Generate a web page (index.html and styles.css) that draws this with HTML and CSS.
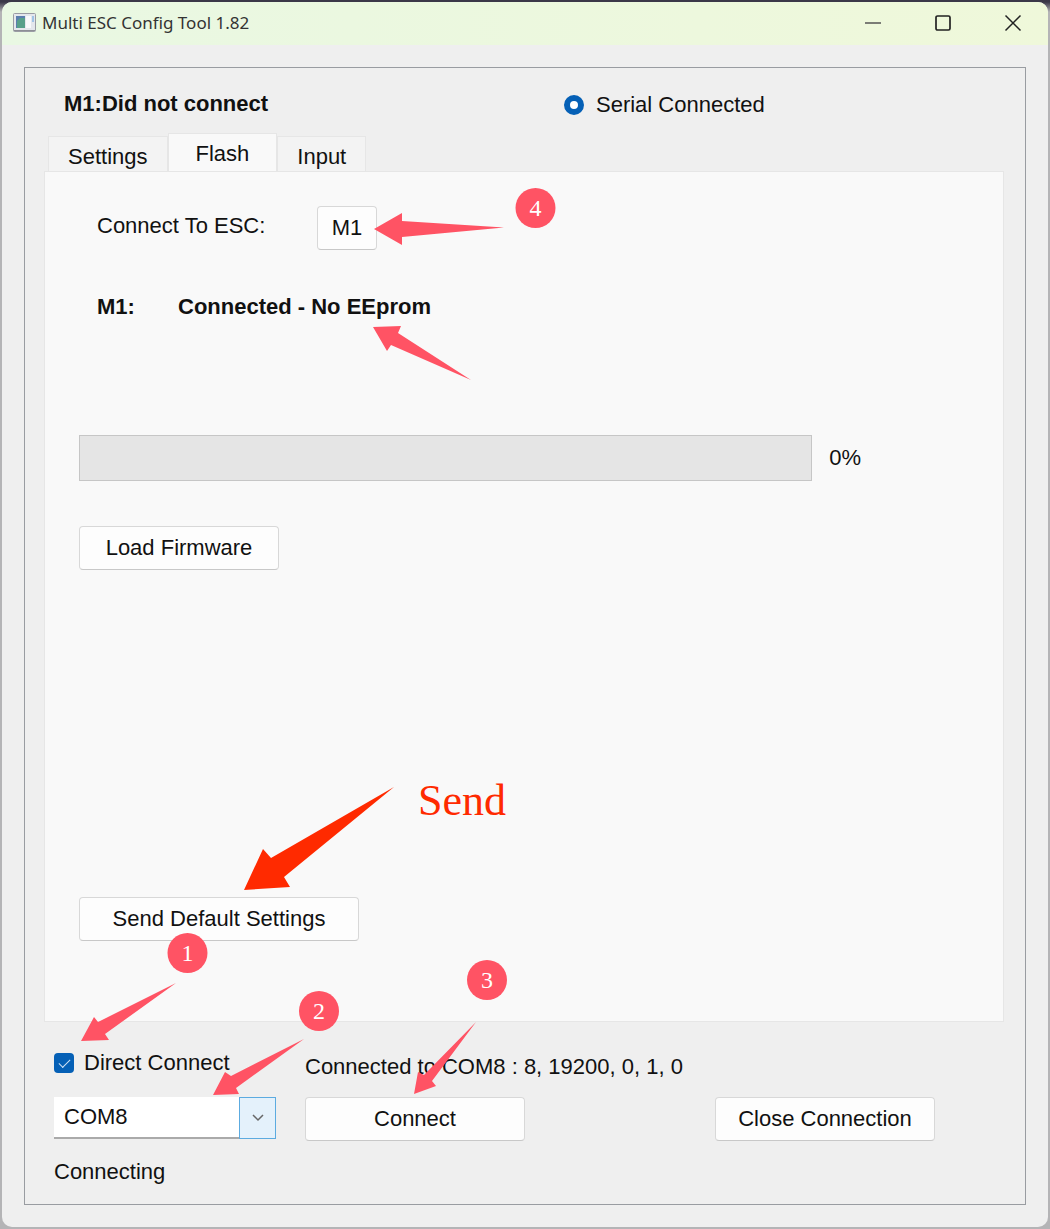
FILE: index.html
```html
<!DOCTYPE html>
<html lang="en">
<head>
<meta charset="utf-8">
<meta name="viewport" content="width=device-width, initial-scale=1">
<title>Multi ESC Config Tool 1.82</title>
<link rel="stylesheet" href="styles.css">
</head>
<body>
<div class="window">
  <header class="titlebar">
    <svg class="app-icon" width="23" height="19" viewBox="0 0 23 19" aria-hidden="true">
      <rect x="0.5" y="0.5" width="22" height="18" rx="1" fill="#e4e7ec" stroke="#9a9ca4"/>
      <rect x="3" y="3" width="9" height="12" fill="#5b7fae"/>
      <path d="M4 8 7 5h5v10H4z" fill="#57a08a"/>
      <rect x="13" y="3" width="5" height="12" fill="#f8f9fb"/>
      <rect x="19" y="3" width="2" height="6" fill="#9fc3e6"/>
      <path d="M1 17.500h21" stroke="#8d8f96"/>
    </svg>
    <h1 class="title">Multi ESC Config Tool 1.82</h1>
    <div class="window-controls">
      <button class="window-button" type="button" aria-label="Minimize">
        <svg width="18" height="18" viewBox="0 0 18 18"><path d="M1 9h16" stroke="#555" stroke-width="1.300"/></svg>
      </button>
      <button class="window-button" type="button" aria-label="Maximize">
        <svg width="18" height="18" viewBox="0 0 18 18"><rect x="2" y="2" width="14" height="14" rx="1.500" fill="none" stroke="#222" stroke-width="1.700"/></svg>
      </button>
      <button class="window-button" type="button" aria-label="Close">
        <svg width="18" height="18" viewBox="0 0 18 18"><path d="M1.500 1.500l15 15M16.500 1.500l-15 15" stroke="#222" stroke-width="1.500"/></svg>
      </button>
    </div>
  </header>

  <main class="frame">
    <div class="status-row">
      <strong>M1:Did not connect</strong>
      <label class="choice serial"><input class="radio" type="radio" checked>Serial Connected</label>
    </div>

    <div class="tabs" role="tablist">
      <button class="tab" type="button" role="tab" aria-selected="false">Settings</button>
      <button class="tab tab-active" type="button" role="tab" aria-selected="true">Flash</button>
      <button class="tab" type="button" role="tab" aria-selected="false">Input</button>
    </div>

    <section class="panel" role="tabpanel">
      <div class="connect-row">
        <span class="connect-label">Connect To ESC:</span>
        <div class="anchor">
          <button class="button button-small" type="button">M1</button>
          <svg class="mark mark-four" width="184" height="62" viewBox="0 0 184 62">
            <path d="M0 43 28 27v8l102 6.500L28 51v8z"/>
            <circle cx="161.500" cy="22" r="20"/>
            <text x="161.500" y="30">4</text>
          </svg>
        </div>
      </div>

      <div class="eeprom-row">
        <strong class="eeprom-name">M1:</strong>
        <div class="anchor">
          <strong>Connected - No EEprom</strong>
          <svg class="mark mark-eeprom" width="98" height="54" viewBox="0 0 98 54" aria-hidden="true">
            <path d="M0 1 28 0l-3 7 73 47L18 19l-4 6z"/>
          </svg>
        </div>
      </div>

      <div class="progress-row">
        <progress class="progress" id="flash-progress" value="0" max="100"></progress>
        <label for="flash-progress">0%</label>
      </div>

      <button class="button button-load" type="button">Load Firmware</button>

      <div class="anchor send">
        <button class="button button-send" type="button">Send Default Settings</button>
        <svg class="mark mark-send" width="270" height="104" viewBox="0 0 270 104">
          <path d="M0 103 19 62l8 9L150 0 40 90l6 10z"/>
          <text x="174" y="28">Send</text>
        </svg>
      </div>
    </section>

    <div class="connection">
      <div class="anchor direct">
        <label class="choice"><input class="checkbox" type="checkbox" checked>Direct Connect</label>
        <svg class="mark mark-one" width="128" height="110" viewBox="0 0 128 110">
          <path d="M0 109 13 85l4 5 78-39-71 51 4 6z"/>
          <circle cx="106.500" cy="21" r="20"/>
          <text x="106.500" y="29">1</text>
        </svg>
      </div>
      <span class="port-status">Connected to COM8 : 8, 19200, 0, 1, 0</span>
      <div class="anchor combo">
        <select class="select" aria-label="Serial port"><option>COM8</option></select>
        <span class="combo-arrow">
          <svg width="12" height="8" viewBox="0 0 12 8" aria-hidden="true"><path d="M1 1l5 5 5-5" fill="none" stroke="#666" stroke-width="1.500"/></svg>
        </span>
        <svg class="mark mark-two" width="128" height="106" viewBox="0 0 128 106">
          <path d="M0 105 12 82l6 4 73-37-68 49 3 6z"/>
          <circle cx="106" cy="21" r="20"/>
          <text x="106" y="29">2</text>
        </svg>
      </div>
      <div class="anchor">
        <button class="button button-wide" type="button">Connect</button>
        <svg class="mark mark-three" width="94" height="136" viewBox="0 0 94 136">
          <path d="M0 135 4 113l6 3 52-53-44 59 4 5z"/>
          <circle cx="73" cy="21" r="20"/>
          <text x="73" y="29">3</text>
        </svg>
      </div>
      <button class="button button-wide" type="button">Close Connection</button>
    </div>
    <p class="message">Connecting</p>
  </main>
</div>
</body>
</html>
```
FILE: styles.css
```css
* {
  box-sizing: border-box;
}

body {
  margin: 0;
  min-height: 100vh;
  padding: 2px;
  display: flex;
  background: linear-gradient(#3b3848 0, #3b3848 2px, #b4b4b6 12px);
  color: #111;
  font: 22px/32px "Liberation Sans", Arial, sans-serif;
}

button,
select {
  font: inherit;
  color: inherit;
}

.window {
  flex: 1;
  display: flex;
  flex-direction: column;
  overflow: hidden;
  background: #efefef;
  border-radius: 10px;
}

.titlebar {
  display: flex;
  align-items: center;
  height: 43px;
  padding: 0 0 2px 11px;
  background: linear-gradient(90deg, #e9f8e3, #eff8da);
}

.title {
  flex: 1;
  margin: 0 0 0 6px;
  color: #333;
  font: 17px/24px "Noto Sans", "Open Sans", sans-serif;
}

.window-controls {
  display: flex;
}

.window-button {
  display: grid;
  place-items: center;
  width: 70px;
  height: 40px;
  padding: 0;
  border: 0;
  background: none;
}

.frame {
  flex: 1;
  display: flex;
  flex-direction: column;
  margin: 22px;
  padding: 20px 21px 16px 19px;
  border: 1px solid #999ca1;
}

.status-row {
  display: grid;
  grid-template-columns: 1fr 440px;
  height: 45px;
  padding-left: 20px;
}

.choice {
  display: flex;
  align-items: center;
  gap: 10px;
}

.serial {
  height: 34px;
}

.radio,
.checkbox {
  appearance: none;
  width: 20px;
  height: 20px;
  margin: 0;
}

.radio {
  margin-right: 2px;
  border: 6px solid #0560b6;
  border-radius: 50%;
  background: #fff;
}

.checkbox {
  display: grid;
  place-items: center;
  border-radius: 4px;
  background: #0560b6;
}

.checkbox::before {
  content: "";
  width: 10px;
  height: 5px;
  margin-bottom: 3px;
  border: solid #cfe2f5;
  border-width: 0 0 1px 1px;
  transform: rotate(-45deg);
}

.tabs {
  display: flex;
  align-items: flex-end;
  height: 38px;
  padding-left: 4px;
}

.tab {
  height: 35px;
  padding: 4px 19px 0;
  border: 1px solid #e6e6e6;
  border-bottom: 0;
  background: #f3f3f3;
}

.tab-active {
  height: 38px;
  padding: 2px 27px 0;
  background: #f9f9f9;
}

.panel {
  flex: 1;
  display: flex;
  flex-direction: column;
  align-items: flex-start;
  padding: 34px;
  padding-bottom: 80px;
  border: 1px solid #e6e6e6;
  background: #f9f9f9;
}

.anchor {
  position: relative;
}

.connect-row,
.eeprom-row {
  display: flex;
  padding-left: 18px;
}

.connect-row {
  margin-bottom: 41px;
}

.connect-label {
  width: 220px;
  line-height: 40px;
}

.eeprom-name {
  width: 81px;
}

.progress-row {
  align-self: stretch;
  display: flex;
  align-items: center;
  gap: 17px;
  margin: 112px 108px 45px 0;
}

.progress {
  appearance: none;
  flex: 1;
  height: 46px;
  border: 1px solid #c6c6c6;
  background: #e5e5e5;
}

.progress::-webkit-progress-bar {
  background: #e5e5e5;
}

.button {
  display: block;
  height: 44px;
  padding: 0;
  border: 1px solid #d8d8d8;
  border-bottom-color: #c8c8c8;
  border-radius: 4px;
  background: #fdfdfd;
}

.button-small {
  width: 60px;
}

.button-load {
  width: 200px;
}

.button-send {
  width: 280px;
}

.button-wide {
  width: 220px;
}

.send {
  margin-top: auto;
}

.connection {
  display: grid;
  grid-template-columns: 222px 1fr 220px;
  column-gap: 29px;
  row-gap: 10px;
  margin-top: 25px;
  padding: 0 69px 0 10px;
}

.direct {
  justify-self: start;
  height: 32px;
}

.port-status {
  grid-column: 2 / 4;
  line-height: 40px;
}

.combo {
  display: flex;
  height: 42px;
}

.select {
  appearance: none;
  flex: 1;
  padding: 0 10px;
  border: 0;
  border-bottom: 2px solid #aaa;
  border-radius: 0;
  background: #fff;
}

.combo-arrow {
  position: absolute;
  inset: 0 0 0 auto;
  display: grid;
  place-items: center;
  width: 37px;
  border: 1px solid #5cabe0;
  background: #e4f1fb;
  pointer-events: none;
}

.message {
  margin: 15px 0 0 10px;
}

/* Callouts drawn over the controls they point to. */
.mark {
  position: absolute;
  z-index: 1;
  overflow: visible;
  fill: #ff5364;
  pointer-events: none;
}

.mark text {
  fill: #fff;
  font: 24px "Liberation Serif", "Times New Roman", serif;
  text-anchor: middle;
}

.mark-four {
  left: 57px;
  top: -20px;
}

.mark-eeprom {
  left: 195px;
  top: 35px;
}

.mark-send {
  left: 165px;
  top: -110px;
  fill: #ff2a00;
}

.mark-send text {
  fill: #ff2a00;
  font-size: 44px;
  text-anchor: start;
}

.mark-one {
  left: 27px;
  top: -115px;
}

.mark-two {
  left: 159px;
  top: -107px;
}

.mark-three {
  left: 109px;
  top: -138px;
}
```
